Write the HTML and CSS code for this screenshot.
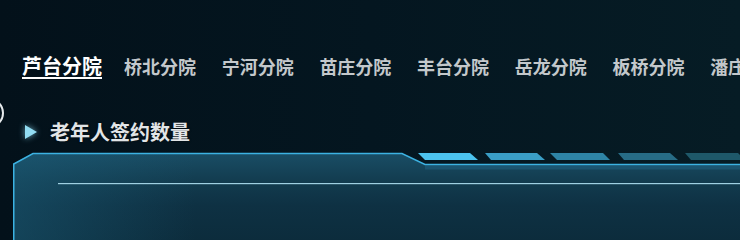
FILE: index.html
```html
<!DOCTYPE html>
<html lang="zh-CN">
<head>
<meta charset="utf-8">
<link rel="stylesheet" href="styles.css">
</head>
<body>
<div class="page">
  <div class="edge-ring"></div>
  <nav class="nav">
    <a class="nav-item active">芦台分院</a>
    <a class="nav-item">桥北分院</a>
    <a class="nav-item">宁河分院</a>
    <a class="nav-item">苗庄分院</a>
    <a class="nav-item">丰台分院</a>
    <a class="nav-item">岳龙分院</a>
    <a class="nav-item">板桥分院</a>
    <a class="nav-item">潘庄分院</a>
  </nav>
  <div class="title-row">
    <svg class="title-icon" width="14" height="16" viewBox="0 0 14 16"><path d="M1 1 L13 8 L1 15 Z" fill="#92dcf2"/></svg>
    <h2 class="title">老年人签约数量</h2>
  </div>
  <div class="panel">
    <svg class="panel-frame" width="727" height="90" viewBox="0 0 727 90">
      <defs>
        <linearGradient id="pf" x1="0" y1="0" x2="0" y2="90" gradientUnits="userSpaceOnUse">
          <stop offset="0" stop-color="#1a4f67"/>
          <stop offset="0.35" stop-color="#123b4e"/>
          <stop offset="0.6" stop-color="#0e3143"/>
          <stop offset="1" stop-color="#0c2c3c"/>
        </linearGradient>
        <linearGradient id="ph" x1="0" y1="0" x2="1" y2="0">
          <stop offset="0" stop-color="#1b5b76" stop-opacity="0.5"/>
          <stop offset="0.25" stop-color="#1b5b76" stop-opacity="0"/>
        </linearGradient>
      </defs>
      <path d="M0 100 L0 13 L20 2.5 L389 2.5 L412 13.5 L730 13.5 L730 100 Z" fill="url(#pf)"/>
      <path d="M0 100 L0 13 L20 2.5 L389 2.5 L412 13.5 L730 13.5 L730 100 Z" fill="url(#ph)"/>
      <rect x="412" y="14.5" width="320" height="4" fill="#1f6080" opacity="0.6"/>
      <path d="M0.75 100 L0.75 13 L20 2.5 L389 2.5 L412 13.5 L730 13.5" fill="none" stroke="#3cb2e2" stroke-width="1.5"/>
      <polygon points="405,2 457,2 465,9 412,9" fill="#4cc3ef"/>
      <polygon points="472,2 524,2 532,9 478,9" fill="#3a9ec6"/>
      <polygon points="537,2 590,2 597,9 544,9" fill="#2e84a6"/>
      <polygon points="605,2 657,2 665,9 611,9" fill="#276c86"/>
      <polygon points="672,2 725,2 732,9 678,9" fill="#1e5869"/>
      <rect x="45" y="32" width="690" height="1.2" fill="#9fd0e2"/>
    </svg>
  </div>
</div>
</body>
</html>
```

FILE: styles.css
```css
html, body {
  margin: 0;
  padding: 0;
  overflow: hidden;
}
body {
  background: linear-gradient(90deg, #03111a 0%, #041620 50%, #061c25 100%);
  font-family: "Noto Sans CJK SC", "Noto Sans", sans-serif;
}
.page {
  position: relative;
  padding-left: 13px;
  overflow: hidden;
}
.edge-ring {
  position: absolute;
  left: -26px;
  top: 98px;
  width: 26px;
  height: 26px;
  border: 2.5px solid #e6eaec;
  border-radius: 50%;
}
.nav {
  display: flex;
  align-items: center;
  white-space: nowrap;
  padding-top: 55px;
  padding-left: 9px;
  height: 22px;
}
.nav-item {
  font-size: 18px;
  font-weight: 700;
  line-height: 22px;
  color: #c3c8cb;
  margin-right: 25.7px;
  flex: none;
}
.nav-item.active {
  font-size: 20px;
  color: #ffffff;
  margin-right: 22px;
  text-decoration: underline;
  text-decoration-thickness: 2px;
  text-underline-offset: 3px;
}
.title-row {
  display: flex;
  align-items: center;
  margin-top: 44px;
  padding-left: 11px;
  height: 22px;
}
.title-icon {
  flex: none;
  filter: drop-shadow(0 0 3px rgba(140, 220, 245, 0.7));
}
.title {
  margin: 0 0 0 12px;
  font-size: 20px;
  font-weight: 700;
  line-height: 22px;
  color: #e2e5e7;
  text-shadow: 0 0 2px rgba(0, 0, 0, 0.6);
}
.panel {
  margin-top: 8px;
  height: 90px;
}
.panel-frame {
  display: block;
}
```
